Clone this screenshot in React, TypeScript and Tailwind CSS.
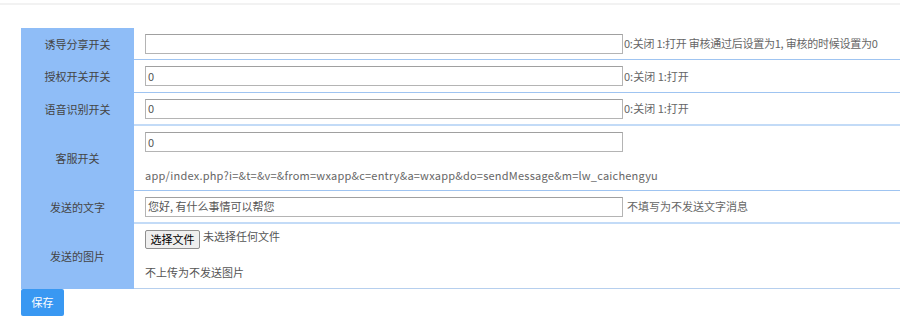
import React from "react";

const font = { fontFamily: '"Microsoft YaHei", "Noto Sans CJK SC", "Noto Sans", sans-serif' };

function Label({ children }: { children: React.ReactNode }) {
  return (
    <div className="w-[113px] shrink-0 bg-[#8fbdf7] flex items-center justify-center text-[11px] text-[#444]">
      {children}
    </div>
  );
}

function TextInput({ value }: { value: string }) {
  return (
    <div className="w-[478px] h-[20px] shrink-0 border border-[#b4b4b4] border-t-[#a0a0a0] bg-white flex items-center px-[2px] text-[11px] text-[#555]">
      {value}
    </div>
  );
}

export default function App() {
  return (
    <div className="w-[900px] h-[320px] bg-white relative overflow-hidden" style={font}>
      <div className="h-[3px]" />
      <div className="h-[2px] bg-[#f2f2f2]" />
      <div className="h-[23px]" />
      <div className="ml-[21px] flex flex-col">
        {/* row 1 */}
        <div className="flex h-[32px]">
          <Label>诱导分享开关</Label>
          <div className="flex-1 border-b border-[#9fc4f1] flex items-center pl-[11px]">
            <TextInput value="" />
            <span className="text-[11px] text-[#666] ml-[1px] tracking-[-0.25px]">0:关闭 1:打开 审核通过后设置为1, 审核的时候设置为0</span>
          </div>
        </div>
        {/* row 2 */}
        <div className="flex h-[33px]">
          <Label>授权开关开关</Label>
          <div className="flex-1 border-b border-[#9fc4f1] flex items-center pl-[11px]">
            <TextInput value="0" />
            <span className="text-[11px] text-[#666] ml-[1px]">0:关闭 1:打开</span>
          </div>
        </div>
        {/* row 3 */}
        <div className="flex h-[33px]">
          <Label>语音识别开关</Label>
          <div className="flex-1 border-b-2 border-[#c3dbf7] flex items-center pl-[11px]">
            <TextInput value="0" />
            <span className="text-[11px] text-[#666] ml-[1px]">0:关闭 1:打开</span>
          </div>
        </div>
        {/* row 4 */}
        <div className="flex h-[65px]">
          <Label>客服开关</Label>
          <div className="flex-1 border-b border-[#9fc4f1] flex flex-col pl-[11px] pt-[6px]">
            <TextInput value="0" />
            <div className="mt-[14px] h-[18px] leading-[18px] text-[11px] text-[#666] tracking-[0.22px]">
              app/index.php?i=&amp;t=&amp;v=&amp;from=wxapp&amp;c=entry&amp;a=wxapp&amp;do=sendMessage&amp;m=lw_caichengyu
            </div>
          </div>
        </div>
        {/* row 5 */}
        <div className="flex h-[33px]">
          <Label>发送的文字</Label>
          <div className="flex-1 border-b-2 border-[#c3dbf7] flex items-center pl-[11px]">
            <TextInput value="您好, 有什么事情可以帮您" />
            <span className="text-[11px] text-[#666] ml-[4px]">不填写为不发送文字消息</span>
          </div>
        </div>
        {/* row 6 */}
        <div className="flex h-[65px]">
          <Label>发送的图片</Label>
          <div className="flex-1 border-b border-[#b6cfee] flex flex-col pl-[11px] pt-[6px]">
            <div className="flex items-start">
              <div className="w-[55px] h-[19px] border border-[#8f8f8f] rounded-[2px] bg-[#efefef] flex items-center justify-center text-[11px] text-black">
                选择文件
              </div>
              <span className="ml-[3px] -mt-[1px] text-[11px] leading-[14px] text-[#555]">未选择任何文件</span>
            </div>
            <div className="mt-[14px] h-[18px] leading-[18px] text-[11px] text-[#555]">不上传为不发送图片</div>
          </div>
        </div>
        <div className="flex">
          <div className="w-[43px] h-[27px] bg-[#3998f2] rounded-[2px] flex items-center justify-center text-[11px] text-white">
            保存
          </div>
        </div>
      </div>
    </div>
  );
}
